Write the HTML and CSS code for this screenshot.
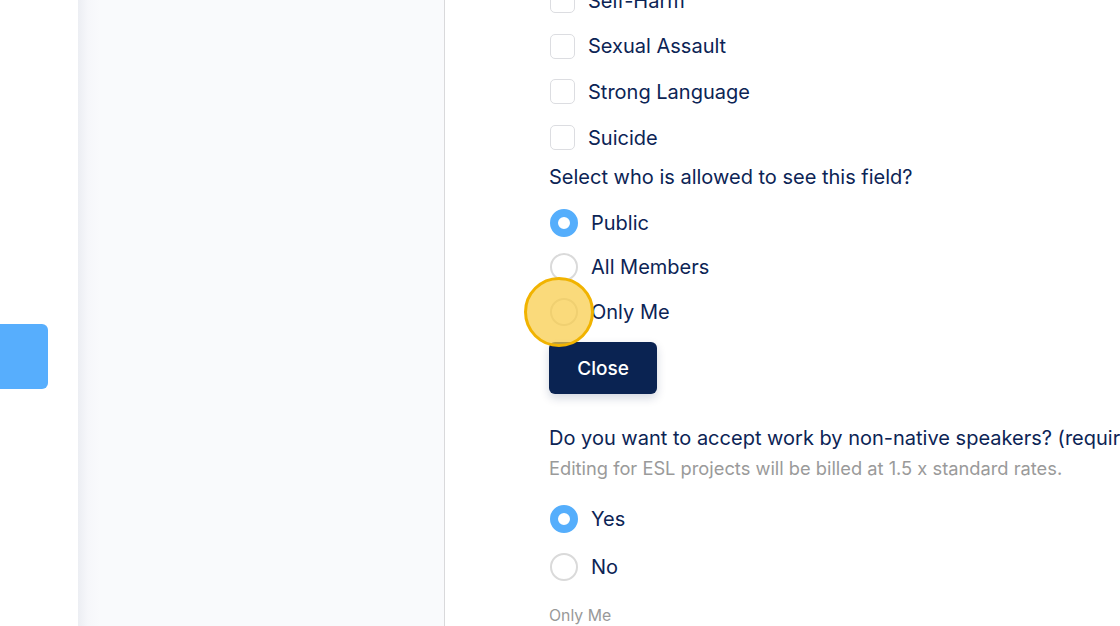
FILE: index.html
```html
<!DOCTYPE html>
<html>
<head>
<meta charset="utf-8">
<link rel="stylesheet" href="styles.css">
</head>
<body>
<div class="page">
  <div class="rail">
    <div class="tab"></div>
  </div>
  <aside class="sidebar"></aside>
  <main class="main">
    <div class="checks">
      <label class="row"><span class="box"></span><span class="lbl">Self-Harm</span></label>
      <label class="row"><span class="box"></span><span class="lbl">Sexual Assault</span></label>
      <label class="row"><span class="box"></span><span class="lbl">Strong Language</span></label>
      <label class="row"><span class="box"></span><span class="lbl">Suicide</span></label>
    </div>
    <p class="question q1">Select who is allowed to see this field?</p>
    <div class="radios">
      <div class="rrow"><span class="radio on"></span><span class="lbl">Public</span></div>
      <div class="rrow"><span class="radio"></span><span class="lbl">All Members</span></div>
      <div class="rrow"><span class="radio"></span><span class="lbl">Only Me</span><span class="spot"></span></div>
    </div>
    <button class="close">Close</button>
    <p class="question q2">Do you want to accept work by non-native speakers? (required)</p>
    <p class="hint">Editing for ESL projects will be billed at 1.5 x standard rates.</p>
    <div class="radios yn">
      <div class="rrow tall"><span class="radio on"></span><span class="lbl">Yes</span></div>
      <div class="rrow tall"><span class="radio"></span><span class="lbl">No</span></div>
    </div>
    <p class="small">Only Me</p>
  </main>
</div>
</body>
</html>
```

FILE: styles.css
```css
html, body {
  margin: 0;
  padding: 0;
  height: 100%;
  overflow: hidden;
  background: #ffffff;
  font-family: Inter, "Noto Sans", "Liberation Sans", sans-serif;
  color: #0c2455;
}
.page {
  display: flex;
  height: 626px;
}
.rail {
  width: 78px;
  flex: none;
}
.tab {
  margin-top: 324px;
  width: 48px;
  height: 65px;
  background: #57aefd;
  border-radius: 0 6px 6px 0;
}
.sidebar {
  width: 366px;
  flex: none;
  background: linear-gradient(to right, #eceef3 0, #f6f7fa 10px, #f9fafc 22px);
  border-right: 1px solid #d9d9db;
}
.main {
  flex: 1;
  padding-left: 104px;
  white-space: nowrap;
  overflow: hidden;
}
.checks {
  margin-top: -22px;
}
.row {
  display: flex;
  align-items: center;
  height: 45.6px;
}
.box {
  width: 23px;
  height: 23px;
  border: 1.5px solid #dcdde1;
  border-radius: 5px;
  background: #fff;
  box-sizing: content-box;
  margin-left: 1px;
}
.lbl {
  font-size: 20px;
  line-height: 24px;
  margin-left: 13px;
}
.question {
  margin: 0;
  font-size: 20px;
  line-height: 24px;
}
.q1 {
  margin-top: 5px;
}
.radios {
  margin-top: 11px;
}
.rrow {
  position: relative;
  display: flex;
  align-items: center;
  height: 44.7px;
}
.rrow .lbl {
  margin-left: 13px;
}
.radio {
  width: 28px;
  height: 28px;
  margin-left: 1px;
  box-sizing: border-box;
  border-radius: 50%;
  border: 2px solid #dadada;
  background: #fff;
}
.radio.on {
  border: 8.5px solid #55aefc;
}
.spot {
  position: absolute;
  left: -25px;
  top: 50%;
  width: 70px;
  height: 70px;
  margin-top: -35px;
  box-sizing: border-box;
  border-radius: 50%;
  border: 3px solid #f1b300;
  background: rgba(248, 204, 72, 0.72);
}
.close {
  display: block;
  margin-top: 8px;
  width: 108px;
  height: 52px;
  border: none;
  border-radius: 6px;
  background: #0a2352;
  color: #ffffff;
  font-family: Inter, "Noto Sans", "Liberation Sans", sans-serif;
  font-size: 19px;
  font-weight: 500;
  box-shadow: 0 4px 10px rgba(10, 35, 82, 0.18);
  padding: 0;
}
.q2 {
  margin-top: 32px;
}
.hint {
  margin: 7px 0 0;
  font-size: 18.3px;
  line-height: 22px;
  color: #9a9a9a;
}
.yn {
  margin-top: 16px;
}
.rrow.tall {
  height: 48px;
}
.small {
  margin: 14.5px 0 0;
  font-size: 15.8px;
  line-height: 19px;
  color: #999999;
}
```
